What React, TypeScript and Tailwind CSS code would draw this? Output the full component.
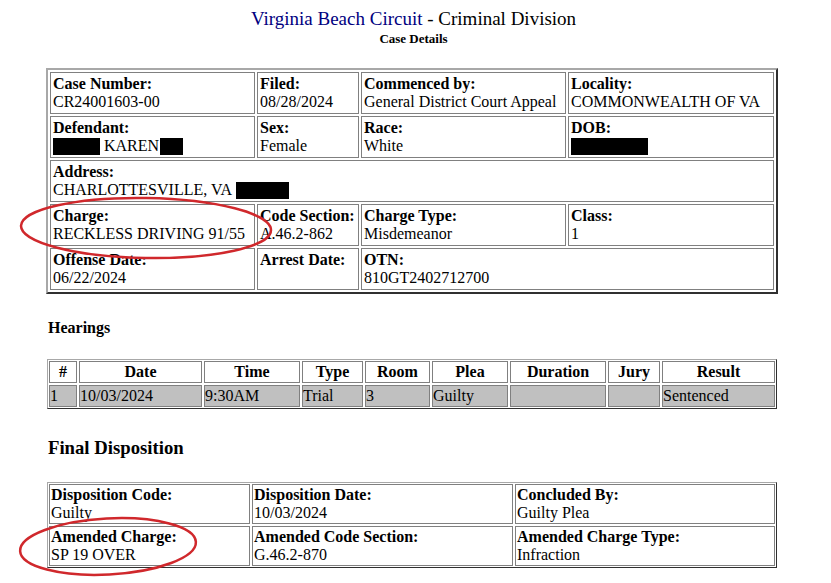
import React from "react";

type CellProps = { label: string; children?: React.ReactNode; className?: string };

function Cell({ label, children, className = "" }: CellProps) {
  return (
    <div className={`border border-[#808080] leading-[18px] ${className}`}>
      <div className="font-bold">{label}</div>
      <div>{children ?? "\u00a0"}</div>
    </div>
  );
}

function Redact({ w, className = "" }: { w: string; className?: string }) {
  return <span className={`inline-block h-[17px] bg-black align-[-3.5px] ${w} ${className}`} />;
}

const hearingCols = ["#", "Date", "Time", "Type", "Room", "Plea", "Duration", "Jury", "Result"];
const hearingRow = ["1", "10/03/2024", "9:30AM", "Trial", "3", "Guilty", "", "", "Sentenced"];

export default function App() {
  return (
    <div className="relative w-[831px] h-[583px] overflow-hidden bg-white text-black text-[16px] font-['Liberation_Serif','Times_New_Roman',serif]">
      {/* Title */}
      <div className="w-[827px] pt-[8px] text-center">
        <div className="text-[19px] leading-[22px]">
          <span className="text-[#000080]">Virginia Beach Circuit</span> - Criminal Division
        </div>
        <div className="text-[13px] leading-[15px] font-bold mt-[1px]">Case Details</div>
      </div>

      {/* Case table */}
      <div className="mt-[22px] ml-[46px] w-[732px] grid grid-cols-[205px_102px_205px_206px] gap-[2px] p-[2px] border-2 border-t-[#a8a8a8] border-l-[#a8a8a8] border-r-[#303030] border-b-[#303030]">
        <Cell label="Case Number:" className="p-[2px]">CR24001603-00</Cell>
        <Cell label="Filed:" className="p-[2px]">08/28/2024</Cell>
        <Cell label="Commenced by:" className="p-[2px]">General District Court Appeal</Cell>
        <Cell label="Locality:" className="p-[2px]">COMMONWEALTH OF VA</Cell>

        <Cell label="Defendant:" className="p-[2px]">
          <Redact w="w-[47px]" /> KAREN<Redact w="w-[23px]" className="ml-[1px]" />
        </Cell>
        <Cell label="Sex:" className="p-[2px]">Female</Cell>
        <Cell label="Race:" className="p-[2px]">White</Cell>
        <Cell label="DOB:" className="p-[2px]">
          <Redact w="w-[77px]" />
        </Cell>

        <Cell label="Address:" className="p-[2px] col-span-4">
          CHARLOTTESVILLE, VA <Redact w="w-[53px]" className="ml-[1px]" />
        </Cell>

        <Cell label="Charge:" className="p-[2px]">RECKLESS DRIVING 91/55</Cell>
        <Cell label="Code Section:" className="p-[2px]">A.46.2-862</Cell>
        <Cell label="Charge Type:" className="p-[2px]">Misdemeanor</Cell>
        <Cell label="Class:" className="p-[2px]">1</Cell>

        <Cell label="Offense Date:" className="p-[2px]">06/22/2024</Cell>
        <Cell label="Arrest Date:" className="p-[2px]" />
        <Cell label="OTN:" className="p-[2px] col-span-2">810GT2402712700</Cell>
      </div>

      {/* Hearings */}
      <div className="mt-[25px] ml-[48px] font-bold leading-[18px]">Hearings</div>
      <div className="mt-[22px] ml-[47px] w-[730px] grid grid-cols-[28px_123px_96px_61px_65px_76px_96px_52px_113px] gap-[2px] p-[1px] border border-t-[#a8a8a8] border-l-[#a8a8a8] border-r-[#303030] border-b-[#303030]">
        {hearingCols.map((c) => (
          <div key={c} className="border border-[#808080] p-[1px] leading-[18px] text-center font-bold">
            {c}
          </div>
        ))}
        {hearingRow.map((v, i) => (
          <div key={i} className="border border-[#808080] bg-[#c0c0c0] p-[1px] pl-0 leading-[18px]">
            {v || "\u00a0"}
          </div>
        ))}
      </div>

      {/* Final Disposition */}
      <div className="mt-[28px] ml-[48px] font-bold text-[18.72px] leading-[21px]">Final Disposition</div>
      <div className="mt-[24px] ml-[47px] w-[730px] grid grid-cols-[201px_261px_260px] gap-[2px] p-[1px] border border-t-[#a8a8a8] border-l-[#a8a8a8] border-r-[#303030] border-b-[#303030]">
        <Cell label="Disposition Code:" className="p-[1px]">Guilty</Cell>
        <Cell label="Disposition Date:" className="p-[1px]">10/03/2024</Cell>
        <Cell label="Concluded By:" className="p-[1px]">Guilty Plea</Cell>
        <Cell label="Amended Charge:" className="p-[1px]">SP 19 OVER</Cell>
        <Cell label="Amended Code Section:" className="p-[1px]">G.46.2-870</Cell>
        <Cell label="Amended Charge Type:" className="p-[1px]">Infraction</Cell>
      </div>

      {/* hand-drawn red circles */}
      <svg className="absolute left-0 top-0 pointer-events-none" width="831" height="583" viewBox="0 0 831 583">
        <ellipse cx="146" cy="228" rx="125" ry="30" fill="none" stroke="#d0282c" strokeWidth="2.5" transform="rotate(1 146 228)" />
        <ellipse cx="108" cy="546.5" rx="88" ry="28" fill="none" stroke="#d0282c" strokeWidth="2.5" transform="rotate(-3 108 546.5)" />
      </svg>
    </div>
  );
}
